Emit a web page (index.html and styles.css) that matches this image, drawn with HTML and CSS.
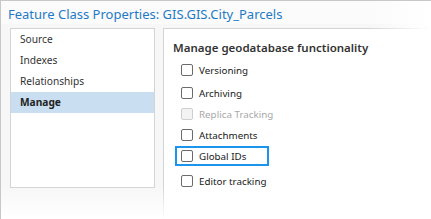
FILE: index.html
```html
<!DOCTYPE html>
<html lang="en">
<head>
    <meta charset="UTF-8">
    <title>Feature Class Properties</title>
    <link rel="stylesheet" href="styles.css">
</head>
<body>
    <div class="dialog">
        <h1 class="title">Feature Class Properties: GIS.GIS.City_Parcels</h1>
        <div class="content">
            <ul class="nav">
                <li>Source</li>
                <li>Indexes</li>
                <li>Relationships</li>
                <li class="active">Manage</li>
            </ul>
            <div class="page">
                <h2>Manage geodatabase functionality</h2>
                <label class="check first"><span class="box"></span>Versioning</label>
                <label class="check"><span class="box"></span>Archiving</label>
                <label class="check disabled"><span class="box"></span>Replica Tracking</label>
                <label class="check"><span class="box"></span>Attachments</label>
                <label class="check focus"><span class="box"></span>Global IDs</label>
                <label class="check"><span class="box"></span>Editor tracking</label>
            </div>
        </div>
        <div class="fade"></div>
    </div>
</body>
</html>
```

FILE: styles.css
```css
body {
    margin: 0;
    font-family: 'Noto Sans', 'Open Sans', sans-serif;
    background: #fff;
}
.dialog {
    position: relative;
    width: 431px;
    height: 219px;
    box-sizing: border-box;
    border-top: 1px solid #c8c8c8;
    border-left: 1px solid #c8c8c8;
    background: #f7f7f7;
    overflow: hidden;
}
.title {
    margin: 0;
    padding: 4px 0 0 7px;
    height: 23px;
    box-sizing: border-box;
    font-size: 13px;
    font-weight: normal;
    color: #1f7ac6;
    background: #fbfbfb;
}
.content {
    display: flex;
    gap: 8px;
    padding: 4px 0 0 9px;
}
.nav {
    list-style: none;
    margin: 0;
    padding: 0;
    width: 143px;
    height: 158px;
    border: 1px solid #d4d4d4;
    background: #fff;
}
.nav li {
    font-size: 10.2px;
    color: #333;
    height: 21px;
    line-height: 20px;
    padding-left: 9px;
}
.nav li.active {
    background: #c9def0;
    font-weight: bold;
    color: #222;
}
.page {
    flex: 1;
    height: 200px;
    border: 1px solid #d4d4d4;
    background: #fff;
    padding: 11px 0 0 9px;
}
.page h2 {
    margin: 0 0 4px;
    font-size: 11.5px;
    line-height: 16px;
    font-weight: 600;
    color: #333;
}
.check {
    display: flex;
    align-items: center;
    gap: 6px;
    box-sizing: border-box;
    width: 94px;
    height: 20px;
    margin: 0 0 1px 2px;
    padding-left: 4px;
    font-size: 9.8px;
    white-space: nowrap;
    color: #1a1a1a;
    border: 2px solid transparent;
}
.check.first {
    margin: 1px 0 3px 2px;
}
.check .box {
    flex: none;
    width: 10px;
    height: 10px;
    border: 1px solid #6b6b6b;
    border-radius: 2px;
    background: #fff;
}
.check.disabled {
    color: #a8a8a8;
}
.check.disabled .box {
    border-color: #cfcfcf;
    background: #f3f3f3;
}
.check.focus {
    border-color: #1a94ec;
    margin-bottom: 5px;
}
.fade {
    position: absolute;
    inset: 0;
    pointer-events: none;
    background:
        linear-gradient(to right, rgba(255,255,255,0) 85%, #fff 100%),
        linear-gradient(to bottom, rgba(255,255,255,0) 85%, #fff 100%);
}
```
